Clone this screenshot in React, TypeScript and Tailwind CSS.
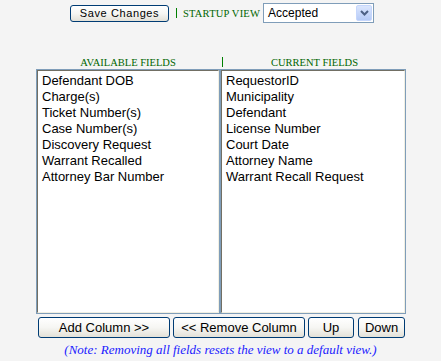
import React from "react";

const available = [
  "Defendant DOB",
  "Charge(s)",
  "Ticket Number(s)",
  "Case Number(s)",
  "Discovery Request",
  "Warrant Recalled",
  "Attorney Bar Number",
];
const current = [
  "RequestorID",
  "Municipality",
  "Defendant",
  "License Number",
  "Court Date",
  "Attorney Name",
  "Warrant Recall Request",
];

function XpButton({ label, className }: { label: string; className: string }) {
  return (
    <div
      className={
        "flex items-center justify-center border border-[#003c74] rounded-[3px] bg-gradient-to-b from-white via-[#f6f6f3] to-[#e3e1d8] text-black " +
        className
      }
    >
      {label}
    </div>
  );
}

function ListBox({ items, width }: { items: string[]; width: string }) {
  return (
    <div className={"border border-[#7f9db9] h-[245px] " + width}>
      <div className="h-full border-t border-l border-[#716f64] border-r border-b border-r-[#f1efe2] border-b-[#f1efe2] bg-white pl-[4px] pt-[2px] text-[13px] leading-[16px] text-black font-['Liberation_Sans',Arial,sans-serif]">
        {items.map((t) => (
          <div key={t} className="whitespace-nowrap">
            {t}
          </div>
        ))}
      </div>
    </div>
  );
}

export default function App() {
  return (
    <div className="w-[441px] h-[361px] bg-[#f4f4f4] font-['Liberation_Sans',Arial,sans-serif] overflow-hidden">
      {/* top row */}
      <div className="flex items-center pl-[70px] pt-[3px] h-[23px]">
        <XpButton
          label="Save Changes"
          className="w-[99px] h-[17px] text-[11px] tracking-[0.6px] mt-[1px]"
        />
        <div className="ml-[7px] w-px h-[10px] bg-[#008000]" />
        <div className="ml-[6px] text-[10.5px] text-[#006600] font-['Liberation_Serif',serif] tracking-[0.2px] mt-[1px]">
          STARTUP VIEW
        </div>
        <div className="ml-[3px] w-[111px] h-[20px] border border-[#7f9db9] bg-white flex items-center justify-between">
          <span className="pl-[4px] text-[12px] text-black">Accepted</span>
          <div className="mr-[1px] w-[16px] h-[16px] rounded-[2px] bg-gradient-to-b from-[#dbe6fd] to-[#b6cbf7] border border-[#c5d6fc] flex items-center justify-center">
            <svg width="9" height="6" viewBox="0 0 9 6">
              <path d="M1 1 L4.5 4.5 L8 1" stroke="#4d6185" strokeWidth="2" fill="none" />
            </svg>
          </div>
        </div>
      </div>

      {/* headers */}
      <div className="flex pl-[36px] mt-[32px] h-[14px] items-center">
        <div className="w-[184px] text-center text-[10.5px] text-[#006600] font-['Liberation_Serif',serif] leading-[10px] pt-[1px]">
          AVAILABLE FIELDS
        </div>
        <div className="w-px h-[10px] bg-[#008000] ml-[2px] -mt-[1px]" />
        <div className="w-[183px] text-center text-[10.5px] text-[#006600] font-['Liberation_Serif',serif] leading-[10px] pt-[1px]">
          CURRENT FIELDS
        </div>
      </div>

      {/* lists */}
      <div className="flex pl-[36px] mt-0">
        <ListBox items={available} width="w-[184px]" />
        <ListBox items={current} width="w-[186px]" />
      </div>

      {/* buttons */}
      <div className="flex pl-[38px] mt-[3px] gap-[3px] text-[13px]">
        <XpButton label="Add Column >>" className="w-[132px] h-[21px]" />
        <XpButton label="<< Remove Column" className="w-[132px] h-[21px]" />
        <XpButton label="Up" className="w-[46px] h-[21px]" />
        <XpButton label="Down" className="w-[47px] h-[21px] ml-[1px]" />
      </div>

      {/* note */}
      <div className="pl-[38px] w-[403px] text-center mt-[4px] text-[13px] italic text-[#1a1aff] font-['Liberation_Serif',serif] leading-[15px]">
        (Note: Removing all fields resets the view to a default view.)
      </div>
    </div>
  );
}
